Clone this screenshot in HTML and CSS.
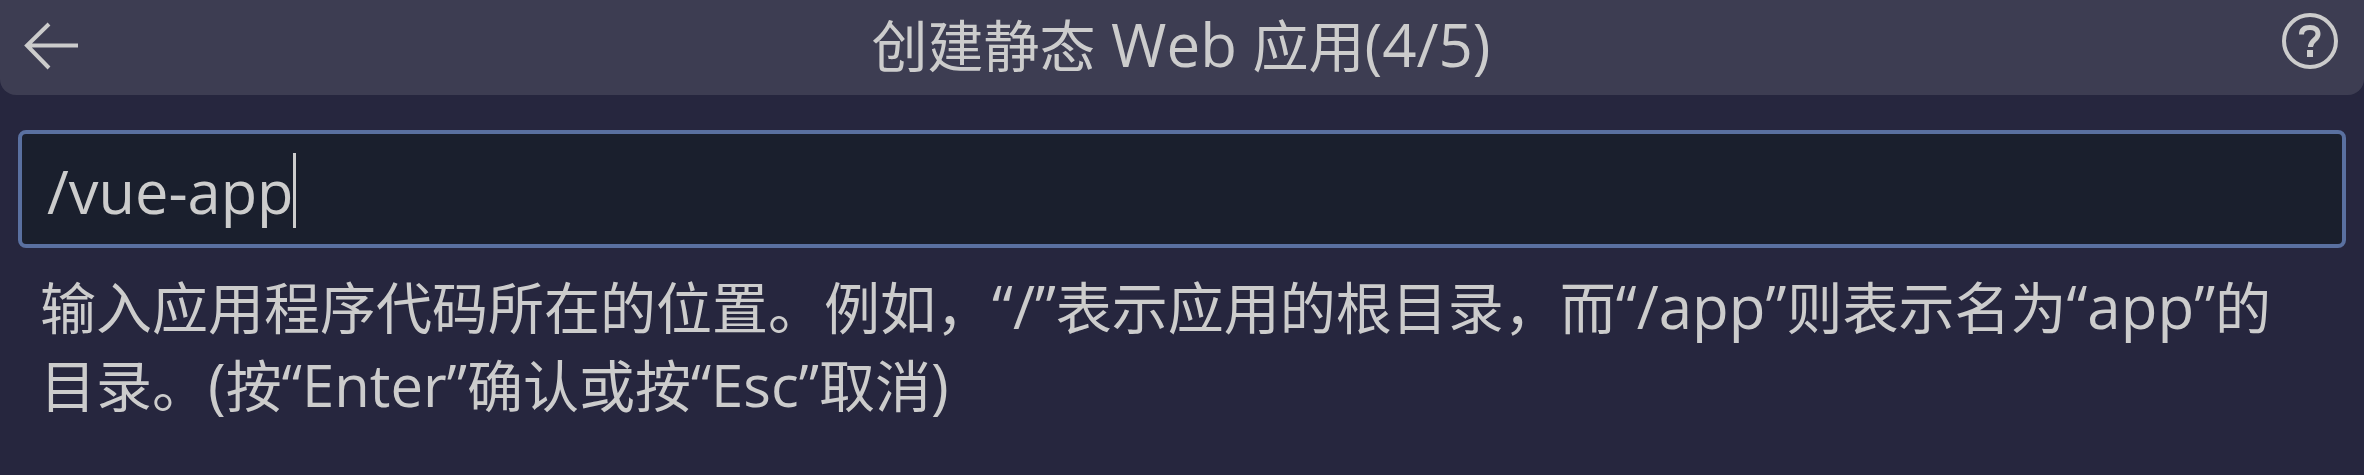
FILE: index.html
```html
<!DOCTYPE html>
<html lang="en">
<head>
    <meta charset="UTF-8">
    <title>创建静态 Web 应用</title>
    <link rel="stylesheet" href="styles.css">
</head>
<body>
    <div class="quick-input">
        <div class="title-bar">
            <svg class="back-icon" viewBox="0 0 56 48" width="56" height="48">
                <path d="M54 23.500H4M25 2 3 23.500 25 46" fill="none" stroke="#ccc" stroke-width="4"/>
            </svg>
            <div class="title">创建静态<span class="lat"> Web </span>应用<span class="lat">(4/5)</span></div>
            <svg class="help-icon" viewBox="0 0 56 56" width="56" height="56">
                <circle cx="28" cy="28" r="26" fill="none" stroke="#ccc" stroke-width="4"/>
                <path d="M19.500 21.500c0-5 3.500-7 8.500-7s8 2.500 8 6.500c0 6-7.500 6-7.500 13" fill="none" stroke="#ccc" stroke-width="5"/>
                <rect x="25" y="37" width="6" height="7" fill="#ccc"/>
            </svg>
        </div>
        <div class="input-box">
            <span class="input-text">/vue-app</span>
        </div>
        <div class="message">输入应用程序代码所在的位置。例如，<span class="lat">“/”</span>表示应用的根目录，而<span class="lat">“/app”</span>则表示名为<span class="lat">“app”</span>的目录。<span class="lat">(</span>按<span class="key">“Enter”</span>确认或按<span class="key">“Esc”</span>取消<span class="lat">)</span></div>
    </div>
</body>
</html>
```
FILE: styles.css
```css
* {
    box-sizing: border-box;
    font-family: "Open Sans", "Noto Sans CJK SC", sans-serif;
}

html, body {
    margin: 0;
    height: 100%;
    background-color: #26263e;
    overflow: hidden;
}

.quick-input {
    color: #cccccc;
}

.title-bar {
    display: flex;
    align-items: center;
    justify-content: space-between;
    height: 95px;
    padding: 0 26px 0 24px;
    background-color: #3d3d52;
    border-radius: 0 0 16px 16px;
}

.title {
    margin-bottom: 6px;
    font-size: 56px;
    line-height: 84px;
    white-space: nowrap;
}

.lat {
    font-size: 60px;
}

.key {
    font-size: 58px;
}

.back-icon, .help-icon {
    flex: none;
}

.back-icon {
    margin-bottom: 4px;
}

.help-icon {
    margin-bottom: 13px;
}

.input-box {
    display: flex;
    align-items: center;
    height: 118px;
    margin: 35px 18px 0;
    padding: 2px 26px 0 25px;
    background-color: #1a1f2d;
    border: 4px solid #5a70a0;
    border-radius: 8px;
}

.input-text {
    font-size: 59.5px;
    line-height: 75px;
    border-right: 3px solid #cccccc;
}

.message {
    margin: 0 18px;
    padding: 20px 40px 0 22px;
    font-size: 56px;
    line-height: 77px;
}
```
